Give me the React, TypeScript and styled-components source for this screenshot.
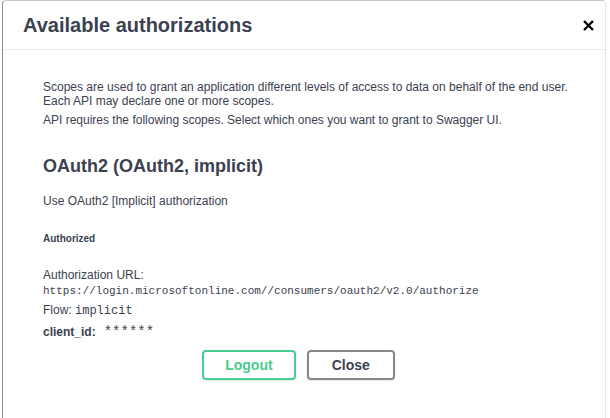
import styled, { createGlobalStyle } from 'styled-components';

const GlobalStyle = createGlobalStyle`
  html, body {
    margin: 0;
    padding: 0;
    background: #ffffff;
  }
  body {
    font-family: 'Liberation Sans', Arial, sans-serif;
    color: #3b4151;
    overflow: hidden;
  }
`;

const Modal = styled.div`
  margin-left: 2px;
  width: 604px;
  height: 430px;
  background: #ffffff;
  border-top: 1px solid #c9c9c9;
  border-left: 1px solid #8c8c8c;
  border-right: 1px solid #e4e4e4;
  border-radius: 4px 4px 0 0;
  box-sizing: border-box;
`;

const Header = styled.div`
  display: flex;
  align-items: center;
  justify-content: space-between;
  height: 48px;
  padding: 0 9px 0 20px;
  border-bottom: 1px solid #ebebeb;
`;

const Title = styled.h3`
  margin: 0;
  font-size: 20px;
  font-weight: 700;
  color: #3b4151;
`;

const CloseIcon = styled.button`
  display: flex;
  align-items: center;
  justify-content: center;
  width: 16px;
  height: 16px;
  padding: 0;
  border: none;
  background: none;
  cursor: pointer;
`;

const Content = styled.div`
  padding: 30px 20px 0 40px;
  display: flex;
  flex-direction: column;
`;

const Text = styled.p<{ gap?: number }>`
  margin: ${({ gap }) => gap ?? 0}px 0 0;
  font-size: 12px;
  line-height: 14px;
  color: #3b4151;
`;

const SchemeTitle = styled.h4`
  margin: 28px 0 0;
  font-size: 18px;
  line-height: 22px;
  font-weight: 700;
  color: #3b4151;
`;

const Status = styled.h6`
  margin: 24px 0 0;
  font-size: 10px;
  line-height: 14px;
  font-weight: 700;
  color: #3b4151;
`;

const Code = styled.code<{ size?: number }>`
  font-family: 'Liberation Mono', 'DejaVu Sans Mono', monospace;
  font-size: ${({ size }) => size ?? 11}px;
  line-height: 14px;
  color: #3b4151;
`;

const FieldRow = styled.div`
  display: flex;
  align-items: baseline;
  gap: 8px;
  margin-top: 6px;
`;

const FieldLabel = styled.label`
  font-size: 12px;
  line-height: 16px;
  font-weight: 700;
  color: #3b4151;
`;

const Buttons = styled.div`
  display: flex;
  justify-content: center;
  gap: 11px;
  margin-top: 10px;
  padding-right: 31px;
`;

const Button = styled.button<{ tone: 'authorize' | 'plain' }>`
  height: 30px;
  padding: 0 ${({ tone }) => (tone === 'authorize' ? 21 : 23)}px;
  font-family: 'Liberation Sans', Arial, sans-serif;
  font-size: 14px;
  font-weight: 700;
  background: transparent;
  border-radius: 4px;
  border: 2px solid ${({ tone }) => (tone === 'authorize' ? '#49cc90' : '#888888')};
  color: ${({ tone }) => (tone === 'authorize' ? '#49cc90' : '#3b4151')};
  box-shadow: 0 1px 2px rgba(0, 0, 0, 0.1);
  cursor: pointer;
`;

export default function App() {
  return (
    <>
      <GlobalStyle />
      <Modal>
        <Header>
          <Title>Available authorizations</Title>
          <CloseIcon aria-label="Close">
            <svg width="11" height="11" viewBox="0 0 11 11">
              <path d="M1 1 L10 10 M10 1 L1 10" stroke="#000" strokeWidth="2.4" />
            </svg>
          </CloseIcon>
        </Header>
        <Content>
          <Text>
            Scopes are used to grant an application different levels of access to data on behalf of the end user.
            <br />
            Each API may declare one or more scopes.
          </Text>
          <Text gap={5}>
            API requires the following scopes. Select which ones you want to grant to Swagger UI.
          </Text>
          <SchemeTitle>OAuth2 (OAuth2, implicit)</SchemeTitle>
          <Text gap={17}>Use OAuth2 [Implicit] authorization</Text>
          <Status>Authorized</Status>
          <Text gap={22}>Authorization URL:</Text>
          <Text gap={1}>
            <Code>https://login.microsoftonline.com//consumers/oauth2/v2.0/authorize</Code>
          </Text>
          <Text gap={5}>
            Flow: <Code size={12}>implicit</Code>
          </Text>
          <FieldRow>
            <FieldLabel>client_id:</FieldLabel>
            <Code size={14}>******</Code>
          </FieldRow>
          <Buttons>
            <Button tone="authorize">Logout</Button>
            <Button tone="plain">Close</Button>
          </Buttons>
        </Content>
      </Modal>
    </>
  );
}
